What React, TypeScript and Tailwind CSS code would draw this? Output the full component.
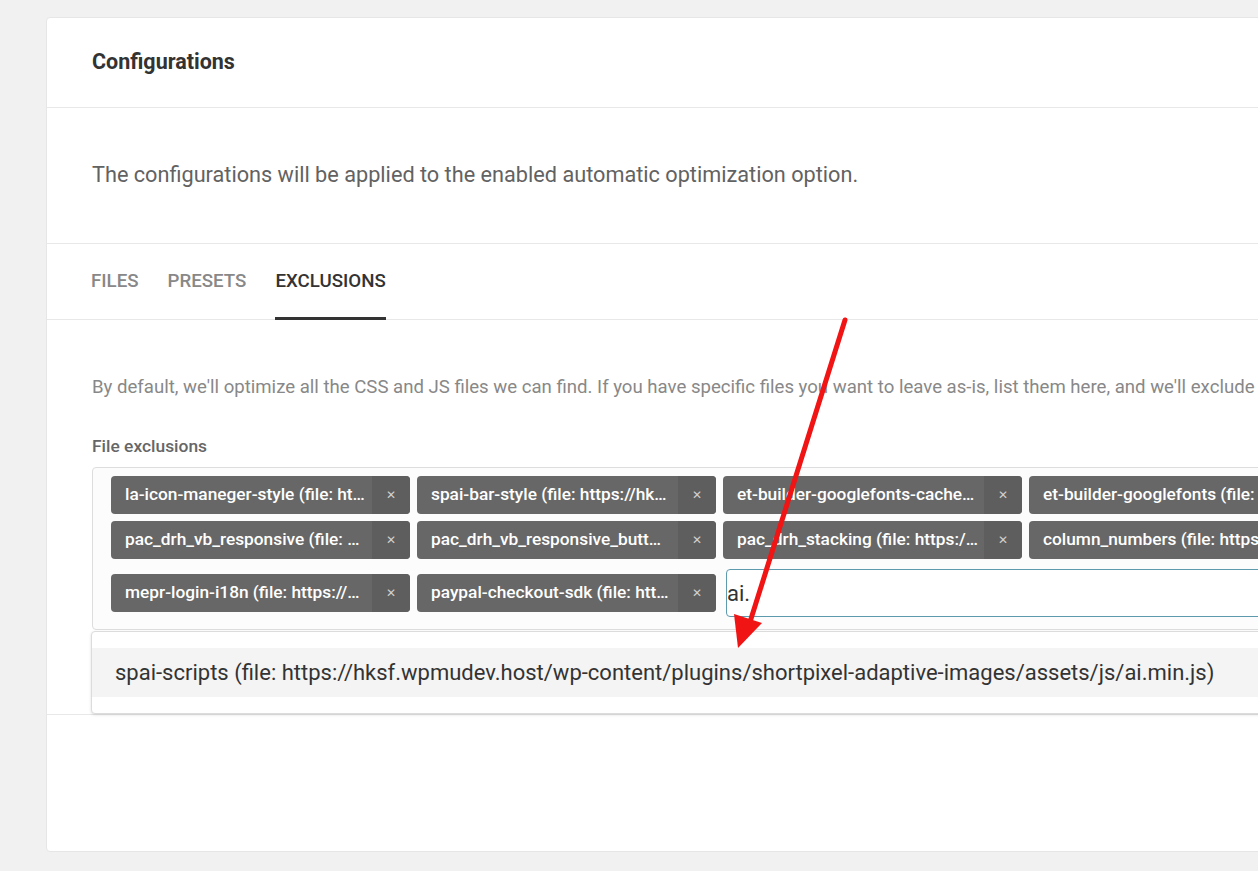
import React from "react";

const tags = [
  "la-icon-maneger-style (file: ht…",
  "spai-bar-style (file: https://hk…",
  "et-builder-googlefonts-cache…",
  "et-builder-googlefonts (file: https://…",
  "pac_drh_vb_responsive (file: …",
  "pac_drh_vb_responsive_butt…",
  "pac_drh_stacking (file: https:/…",
  "column_numbers (file: https://…",
  "mepr-login-i18n (file: https://…",
  "paypal-checkout-sdk (file: htt…",
];

function Tag({ label }: { label: string }) {
  return (
    <div className="flex h-[38px] w-[299px] shrink-0 overflow-hidden rounded-[4px] bg-[#676767] text-white">
      <div className="flex flex-1 items-center overflow-hidden whitespace-nowrap pl-[14px] text-[17.3px] font-medium">
        {label}
      </div>
      <div className="flex w-[38px] items-center justify-center bg-[#5e5e5e] text-[12px] text-[#d0d0d0]">
        ✕
      </div>
    </div>
  );
}

export default function App() {
  return (
    <div
      className="h-[871px] w-screen overflow-hidden bg-[#f1f1f1] pl-[46px] pt-[17px]"
      style={{ fontFamily: "Roboto, 'Liberation Sans', sans-serif" }}
    >
      <div className="h-[835px] w-[1400px] rounded-[4px] border border-[#e6e6e6] bg-white">
        {/* header */}
        <div className="flex h-[90px] items-center border-b border-[#e8e8e8] px-[45px]">
          <h1 className="text-[21.5px] font-bold text-[#333]">Configurations</h1>
        </div>

        {/* description */}
        <div className="flex h-[136px] items-center border-b border-[#e8e8e8] px-[45px]">
          <p className="text-[21.7px] text-[#626262]">
            The configurations will be applied to the enabled automatic
            optimization option.
          </p>
        </div>

        {/* tabs */}
        <div className="flex h-[76px] items-stretch gap-[29px] border-b border-[#e8e8e8] px-[44px] text-[18.7px] font-medium uppercase">
          <div className="flex items-center text-[#888]">Files</div>
          <div className="flex items-center text-[#888]">Presets</div>
          <div className="relative flex items-center text-[#333]">
            Exclusions
            <div className="absolute bottom-[-1px] left-0 right-0 h-[3px] bg-[#333]" />
          </div>
        </div>

        {/* exclusions */}
        <div className="h-[395px] border-b border-[#e8e8e8] px-[45px] pt-[55px]">
          <p className="whitespace-nowrap text-[18.6px] leading-[24px] text-[#888]">
            By default, we'll optimize all the CSS and JS files we can find. If
            you have specific files you want to leave as-is, list them here,
            and we'll exclude them.
          </p>
          <div className="mt-[37px] text-[17.4px] font-medium leading-[20px] text-[#666]">
            File exclusions
          </div>
          <div className="relative mt-[11px]">
            <div className="flex flex-wrap items-center gap-[7px] rounded-[4px] border border-[#ddd] bg-[#fcfcfc] pb-[9px] pl-[18px] pr-[18px] pt-[8px]">
              {tags.map((t) => (
                <Tag key={t} label={t} />
              ))}
              <div className="my-[3px] ml-[3px] flex h-[48px] min-w-[200px] flex-1 items-center rounded-[4px] border border-[#5d9aad] bg-white text-[22px] text-[#333]">
                ai.
              </div>
            </div>
            <div className="absolute left-[-1px] right-0 top-[calc(100%+1px)] rounded-[4px] border border-[#dcdcdc] bg-white py-[16px] shadow-[0_1px_3px_rgba(0,0,0,0.12)]">
              <div className="flex h-[49px] items-center bg-[#f4f4f4] pl-[23px] text-[22px] text-[#333]">
                spai-scripts (file:
                https://hksf.wpmudev.host/wp-content/plugins/shortpixel-adaptive-images/assets/js/ai.min.js)
              </div>
            </div>
          </div>
        </div>
      </div>

      {/* annotation arrow */}
      <svg
        className="pointer-events-none absolute left-0 top-0"
        width="1258"
        height="871"
        viewBox="0 0 1258 871"
      >
        <line
          x1="845"
          y1="320"
          x2="750"
          y2="622"
          stroke="#f01414"
          strokeWidth="5"
          strokeLinecap="round"
        />
        <polygon points="738,648 734,614 762,623" fill="#f01414" />
      </svg>
    </div>
  );
}
